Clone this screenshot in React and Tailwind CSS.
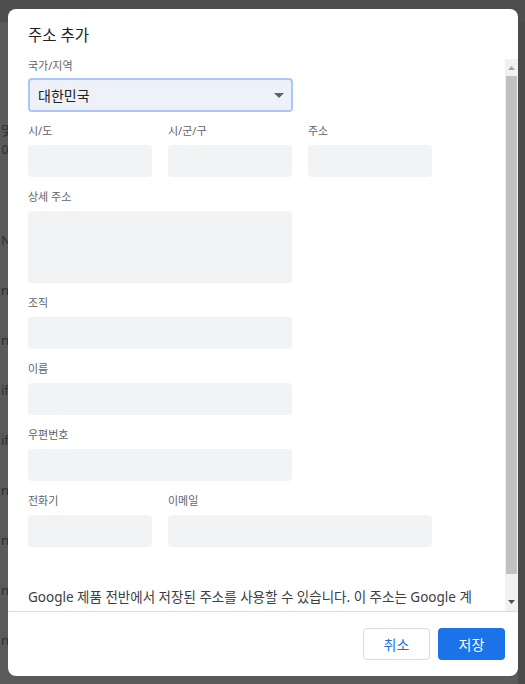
import React from 'react';

const font = { fontFamily: '"Noto Sans", "Noto Sans CJK KR", sans-serif' };

const Field = ({ label, className = 'w-[124px]', tall = false }) => (
    <div className="flex flex-col">
        <div className="text-[11px] leading-[14px] text-[#5f6368] mb-[7px]">{label}</div>
        <div className={`${className} ${tall ? 'h-[72px]' : 'h-[32px]'} rounded-[4px] bg-[#f1f3f4]`} />
    </div>
);

const BgLines = () => {
    const marks = [
        { t: 130, s: '및' }, { t: 150, s: '이' }, { t: 240, s: 'N' }, { t: 290, s: 'nj' },
        { t: 340, s: 'nj' }, { t: 390, s: 'if' }, { t: 440, s: 'if' }, { t: 490, s: 'nj' },
        { t: 540, s: 'nj' }, { t: 590, s: 'nj' }, { t: 640, s: 'nj' },
    ];
    return (
        <div className="absolute inset-0 bg-[#5a5a5a] overflow-hidden">
            <div className="h-[22px] bg-[#4e4e4e]" />
            <div className="absolute right-0 top-[22px] bottom-0 w-[7px] bg-[#4b4b4b]" />
            {marks.map((m, i) => (
                <div key={i} className="absolute left-[1px] text-[13px] text-[#2e2e2e]" style={{ top: m.t - 9 }}>
                    {m.s}
                </div>
            ))}
        </div>
    );
};

export default function App() {
    return (
        <div className="relative w-[525px] h-[684px] overflow-hidden" style={font}>
            <BgLines />
            <div className="relative pt-[9px] pl-[8px]">
                <div className="w-[510px] h-[667px] bg-white rounded-[8px] flex flex-col overflow-hidden">
                    <div className="px-[20px] pt-[16px] h-[50px] text-[15.5px] leading-[20px] text-[#202124]">
                        주소 추가
                    </div>
                    <div className="flex h-[552px]">
                        <div className="flex-1 overflow-hidden pl-[20px] pr-[20px]">
                            <div className="flex flex-col">
                                <div className="text-[11px] leading-[14px] text-[#5f6368] mb-[5px]">국가/지역</div>
                                <div className="w-[265px] h-[34px] rounded-[4px] border-2 border-[#a8c7fa] bg-[#eef2f8] flex items-center justify-between pl-[8px] pr-[7px]">
                                    <span className="text-[14px] text-[#202124]">대한민국</span>
                                    <svg width="10" height="5" viewBox="0 0 10 5">
                                        <path d="M0 0 L10 0 L5 5 Z" fill="#5f6368" />
                                    </svg>
                                </div>
                            </div>
                            <div className="flex gap-[16px] mt-[12px]">
                                <Field label="시/도" />
                                <Field label="시/군/구" />
                                <Field label="주소" />
                            </div>
                            <div className="mt-[13px]">
                                <Field label="상세 주소" className="w-[264px]" tall />
                            </div>
                            <div className="mt-[13px]">
                                <Field label="조직" className="w-[264px]" />
                            </div>
                            <div className="mt-[13px]">
                                <Field label="이름" className="w-[264px]" />
                            </div>
                            <div className="mt-[13px]">
                                <Field label="우편번호" className="w-[264px]" />
                            </div>
                            <div className="flex gap-[16px] mt-[13px]">
                                <Field label="전화기" />
                                <Field label="이메일" className="w-[264px]" />
                            </div>
                            <p className="mt-[38px] w-[452px] text-[13.5px] leading-[24px] text-[#3c4043]">
                                Google 제품 전반에서 저장된 주소를 사용할 수 있습니다. 이 주소는 Google 계정에 저장되며 다른 Google 서비스에서도 사용할 수 있습니다.
                            </p>
                        </div>
                        <div className="w-[13px] bg-[#f1f1f1] flex flex-col items-center">
                            <div className="h-[17px] flex items-center justify-center">
                                <svg width="7" height="4" viewBox="0 0 7 4">
                                    <path d="M0 4 L7 4 L3.5 0 Z" fill="#a3a3a3" />
                                </svg>
                            </div>
                            <div className="w-[11px] h-[498px] bg-[#c1c1c1]" />
                            <div className="flex-1" />
                            <div className="h-[19px] flex items-center justify-center">
                                <svg width="7" height="4" viewBox="0 0 7 4">
                                    <path d="M0 0 L7 0 L3.5 4 Z" fill="#505050" />
                                </svg>
                            </div>
                        </div>
                    </div>
                    <div className="border-t border-[#dadce0] flex justify-end gap-[8px] px-[13px] pt-[16px]">
                        <button className="w-[67px] h-[32px] rounded-[4px] border border-[#dadce0] bg-white text-[#1a73e8] text-[14px]">
                            취소
                        </button>
                        <button className="w-[67px] h-[32px] rounded-[4px] bg-[#1a73e8] text-white text-[14px]">
                            저장
                        </button>
                    </div>
                </div>
            </div>
        </div>
    );
}
